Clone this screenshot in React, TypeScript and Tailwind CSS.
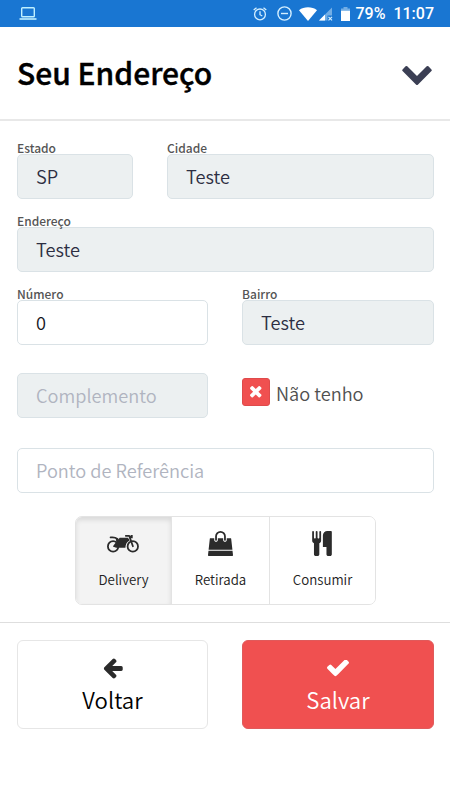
import { useState } from "react";
import type { ReactNode } from "react";

interface IconProps {
  className: string;
}

interface FieldProps {
  label?: string;
  value?: string;
  placeholder?: string;
  disabled?: boolean;
  className: string;
}

type OrderType = "delivery" | "retirada" | "consumir";

function ChevronIcon({ className }: IconProps) {
  return (
    <svg viewBox="90 533 1612 1035" className={className} fill="currentColor">
      <path d="M1683 808l-742 741q-19 19-45 19t-45-19l-742-741q-19-19-19-45.500t19-45.500l166-165q19-19 45-19t45 19l531 531 531-531q19-19 45-19t45 19l166 165q19 19 19 45.500t-19 45.500z" />
    </svg>
  );
}

function CheckIcon({ className }: IconProps) {
  return (
    <svg viewBox="121 434 1550 1088" className={className} fill="currentColor">
      <path d="M1671 566q0 40-28 68l-724 724-136 136q-28 28-68 28t-68-28l-136-136-362-362q-28-28-28-68t28-68l136-136q28-28 68-28t68 28l294 295 656-657q28-28 68-28t68 28l136 136q28 28 28 68z" />
    </svg>
  );
}

function TimesIcon({ className }: IconProps) {
  return (
    <svg viewBox="302 366 1188 1188" className={className} fill="currentColor">
      <path d="M1490 1322q0 40-28 68l-136 136q-28 28-68 28t-68-28l-294-294-294 294q-28 28-68 28t-68-28l-136-136q-28-28-28-68t28-68l294-294-294-294q-28-28-28-68t28-68l136-136q28-28 68-28t68 28l294 294 294-294q28-28 68-28t68 28l136 136q28 28 28 68t-28 68l-294 294 294 294q28 28 28 68z" />
    </svg>
  );
}

function ArrowLeftIcon({ className }: IconProps) {
  return (
    <svg viewBox="64 139 1600 1642" className={className} fill="currentColor">
      <path d="M1664 896v128q0 53-32.500 90.500t-84.500 37.500h-704l293 294q38 36 38 90t-38 90l-75 76q-37 37-90 37-52 0-91-37l-651-652q-37-37-37-90 0-52 37-91l651-650q38-38 91-38 52 0 90 38l75 74q38 38 38 91t-38 91l-293 293h704q52 0 84.500 37.500t32.500 90.500z" />
    </svg>
  );
}

function CutleryIcon({ className }: IconProps) {
  return (
    <svg viewBox="192 0 1408 1792" className={className} fill="currentColor">
      <path d="M832 64v640q0 61-35.500 111t-92.500 70v779q0 52-38 90t-90 38h-128q-52 0-90-38t-38-90v-779q-57-20-92.500-70t-35.500-111v-640q0-26 19-45t45-19 45 19 19 45v416q0 26 19 45t45 19 45-19 19-45v-416q0-26 19-45t45-19 45 19 19 45v416q0 26 19 45t45 19 45-19 19-45v-416q0-26 19-45t45-19 45 19 19 45zm768 0v1600q0 52-38 90t-90 38h-128q-52 0-90-38t-38-90v-512h-224q-13 0-22.500-9.500t-9.500-22.500v-800q0-132 94-226t226-94h256q26 0 45 19t19 45z" />
    </svg>
  );
}

function BagIcon({ className }: IconProps) {
  return (
    <svg viewBox="0 0 1792 1792" className={className} fill="currentColor">
      <path d="M1757 1408l35 313q3 28-16 50-19 21-48 21h-1664q-29 0-48-21-19-22-16-50l35-313h1722zm-93-839l86 775h-1708l86-775q3-24 21-40.500t43-16.500h256v128q0 53 37.500 90.500t90.500 37.500 90.500-37.500 37.500-90.500v-128h384v128q0 53 37.500 90.500t90.500 37.500 90.500-37.500 37.500-90.500v-128h256q25 0 43 16.500t21 40.500zm-384-185v256q0 26-19 45t-45 19-45-19-19-45v-256q0-106-75-181t-181-75-181 75-75 181v256q0 26-19 45t-45 19-45-19-19-45v-256q0-159 112.500-271.500t271.500-112.500 271.500 112.500 112.500 271.500z" />
    </svg>
  );
}

function MotorcycleIcon({ className }: IconProps) {
  return (
    <svg viewBox="0 0 32 19" className={className} fill="none" stroke="currentColor" strokeWidth="1.800">
      <circle cx="6.100" cy="12.400" r="5.200" />
      <circle cx="25.800" cy="12.400" r="5.200" />
      <path d="M3.600 3.400h1.900c2.200 0 3.600.5 5 1.600" strokeLinecap="round" />
      <path d="M18.800 1.800h3.400l3.700 10.400" strokeLinecap="round" strokeLinejoin="round" />
      <path d="M24.200 1h1.500v3.200h-3.200l-.7-1.200z" fill="currentColor" stroke="none" />
      <path d="M8.700 4.600l2.800.6 1.200-1.400h8.200l1.800 2.500c-2.900 1.700-4.200 4.100-4.300 7.500h-9.200l-3.400-1.200 3.500-4.800z" fill="currentColor" stroke="none" />
    </svg>
  );
}

function StatusBar() {
  return (
    <header className="flex h-[27px] items-center justify-between bg-[#1976d2] pt-px pr-4 pl-[19px] text-white">
      <svg viewBox="0 0 18 14" className="h-3.5 w-[18px]" fill="none" stroke="#bff0ff">
        <rect x="2.700" y="0.800" width="12.600" height="9" rx="0.800" strokeWidth="1.400" />
        <path d="M0.500 12h17" strokeWidth="1.600" />
      </svg>
      <div className="flex items-center">
        <svg viewBox="0 0 14 14" className="h-3.5 w-3.5" fill="none" stroke="#d4efff" strokeWidth="1.300">
          <circle cx="7" cy="7.400" r="5.400" />
          <path d="M7 4.300v3.400l2.300 1.300M.7 3L3.500.7M13.300 3L10.500.7" />
        </svg>
        <svg viewBox="0 0 15 15" className="-mt-px ml-2.5 h-[15px] w-[15px]" fill="none" stroke="#d4efff" strokeWidth="1.400">
          <circle cx="7.500" cy="7.500" r="6.600" />
          <path d="M4 7.500h7" />
        </svg>
        <svg viewBox="0 0 18 14" className="-mt-px ml-[7px] h-3.5 w-[18px]" fill="currentColor">
          <path d="M0 3.200C5 -.6 13 -.6 18 3.200L9 14z" />
        </svg>
        <svg viewBox="0 0 14 14" className="-mt-px ml-0.5 h-3.5 w-3.5">
          <path d="M0 13.500L13 .5v8H8.500v5z" fill="#73aee5" />
          <path d="M0 13.500L6 7.500v6z" fill="#ffffff" />
          <path d="M9.500 9.800l3.500 3.500M13 9.800l-3.500 3.500" stroke="#d4efff" strokeWidth="1.200" />
        </svg>
        <svg viewBox="0 0 9 14" className="-mt-px ml-2 h-3.5 w-[9px]">
          <path d="M2.500 0h4v1.500H9V4H0V1.500h2.500z" fill="#73aee5" />
          <path d="M0 3.800h9V14H0z" fill="#ffffff" />
        </svg>
        <span className="ml-[5px] font-['Roboto',sans-serif] text-[16px] leading-none font-medium">79%</span>
        <span className="ml-2 font-['Roboto',sans-serif] text-[16px] leading-none font-medium">11:07</span>
      </div>
    </header>
  );
}

function Field({ label, value, placeholder, disabled, className }: FieldProps) {
  return (
    <label className={`block ${className}`}>
      {label && <span className="block h-3.5 text-[12px] leading-4 font-medium text-[#555]">{label}</span>}
      <input
        type="text"
        defaultValue={value}
        placeholder={placeholder}
        disabled={disabled}
        className="block h-[45px] w-full rounded-[5px] border border-[#dae2e6] bg-white px-[18px] pb-px text-[18.200px] font-[350] text-[#15151c] placeholder:text-[#b0b4c0] disabled:bg-[#ecf0f1] disabled:text-[#2c2e42]"
      />
    </label>
  );
}

interface OptionProps {
  text: string;
  active: boolean;
  onClick: () => void;
  className: string;
  children: ReactNode;
}

function Option({ text, active, onClick, className, children }: OptionProps) {
  return (
    <button
      type="button"
      onClick={onClick}
      className={`flex flex-col items-center border-[#e3e3e3] pt-3.5 ${className} ${
        active ? "bg-[#f3f3f3] shadow-[inset_0_3px_5px_rgba(0,0,0,0.110)]" : "bg-white"
      }`}
    >
      <span className="mr-px flex h-[25px] items-center">{children}</span>
      <span className="mt-3.5 text-[13.300px] leading-5 font-[350] text-[#222]">{text}</span>
    </button>
  );
}

export default function App() {
  const [orderType, setOrderType] = useState<OrderType>("delivery");

  return (
    <div className="h-[800px] w-[450px] overflow-hidden bg-white font-['Noto_Sans_CJK_JP',sans-serif] text-[#333]">
      <StatusBar />

      <div className="flex h-[94px] items-center justify-between border-b-2 border-[#e8e8e8] pr-[18px] pl-[17px]">
        <h1 className="-mt-[3px] text-[30px] leading-none font-medium text-black [-webkit-text-stroke:0.4px_black]">Seu Endereço</h1>
        <ChevronIcon className="mt-1 h-[19px] w-[30px] text-[#3b3f54]" />
      </div>

      <form className="pt-[19px] pr-4 pl-[17px]" onSubmit={(e) => e.preventDefault()}>
        <div className="flex gap-[34px]">
          <Field label="Estado" value="SP" disabled className="w-[116px]" />
          <Field label="Cidade" value="Teste" disabled className="w-[267px]" />
        </div>
        <Field label="Endereço" value="Teste" disabled className="mt-3.5 w-[417px]" />
        <div className="mt-3.5 flex gap-[34px]">
          <Field label="Número" value="0" className="w-[191px]" />
          <Field label="Bairro" value="Teste" disabled className="w-48" />
        </div>

        <div className="mt-7 flex gap-[34px]">
          <Field placeholder="Complemento" disabled className="w-[191px]" />
          <div className="mt-[5px] flex h-7 items-center">
            <button type="button" className="flex size-7 items-center justify-center rounded-[3px] border border-[#df4a4b] bg-[#f05050] text-white">
              <TimesIcon className="size-[11.500px]" />
            </button>
            <span className="mt-0.5 ml-1.5 text-[18.200px] leading-7 font-[350] text-[#505050]">Não tenho</span>
          </div>
        </div>
        <Field placeholder="Ponto de Referência" className="mt-[30px] w-[417px]" />

        <div className="mr-[58px] ml-[58px] mt-[23px] flex h-[89px] w-[301px] overflow-hidden rounded-[7px] border border-[#e3e3e3]">
          <Option text="Delivery" active={orderType === "delivery"} onClick={() => setOrderType("delivery")} className="w-[96px] border-r">
            <MotorcycleIcon className="h-[19px] w-8 text-[#2b2b2b]" />
          </Option>
          <Option text="Retirada" active={orderType === "retirada"} onClick={() => setOrderType("retirada")} className="w-[98px] border-r">
            <BagIcon className="size-[25px] text-[#2b2b2b]" />
          </Option>
          <Option text="Consumir" active={orderType === "consumir"} onClick={() => setOrderType("consumir")} className="w-[105px]">
            <CutleryIcon className="h-[25px] w-5 text-[#2b2b2b]" />
          </Option>
        </div>
      </form>

      <footer className="mt-[17px] flex gap-[34px] border-t border-[#dedede] pt-[17px] pr-4 pl-[17px]">
        <button type="button" className="flex h-[89px] w-[191px] flex-col items-center rounded-[6px] border border-[#e6e6e6] bg-white pt-[17px]">
          <ArrowLeftIcon className="h-[21px] w-[21px] text-[#2b2b2b]" />
          <span className="mt-1 text-[22.200px] leading-8 font-[350] text-black">Voltar</span>
        </button>
        <button type="button" className="flex h-[89px] w-48 flex-col items-center rounded-[6px] border border-[#e05a5b] bg-[#f05050] pt-[19px] text-white">
          <CheckIcon className="h-[17px] w-[22px]" />
          <span className="mt-1.5 text-[22.200px] leading-8 font-[350]">Salvar</span>
        </button>
      </footer>
    </div>
  );
}
